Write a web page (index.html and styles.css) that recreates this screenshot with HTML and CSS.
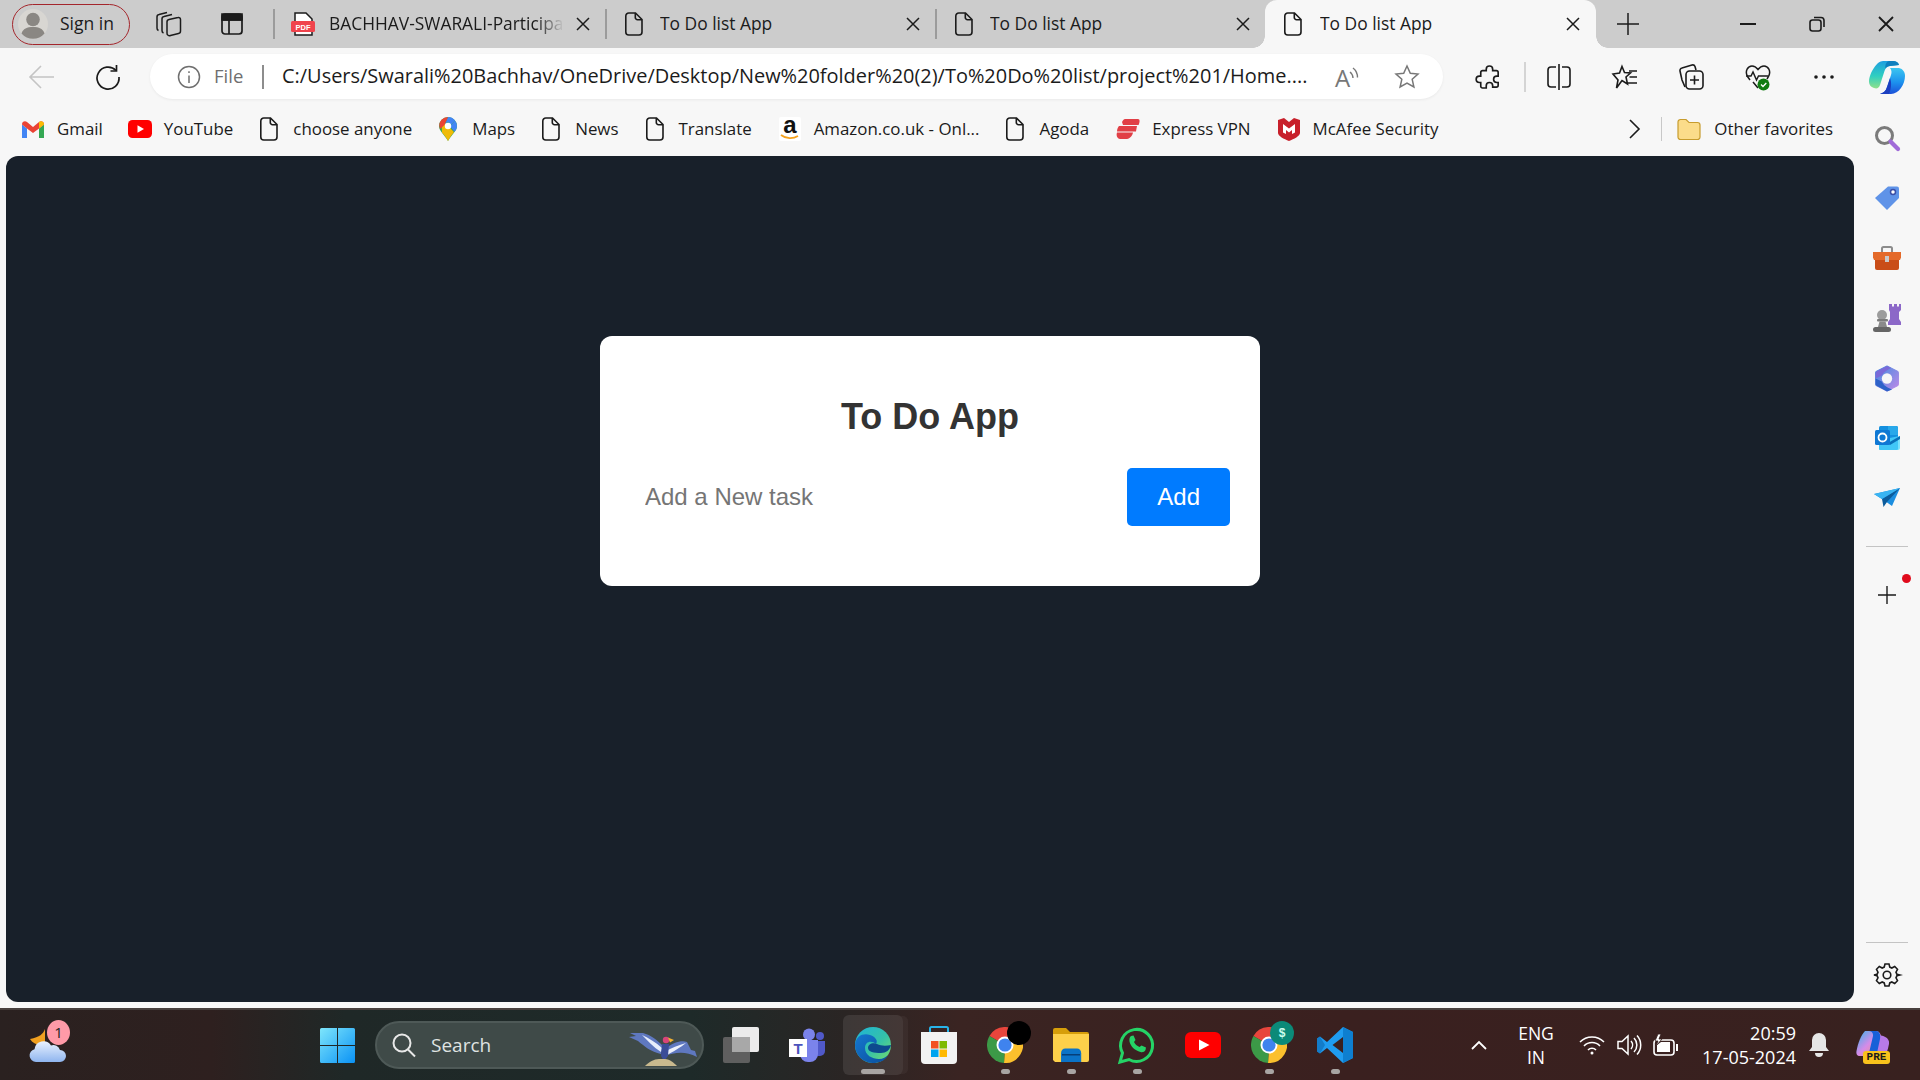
FILE: index.html
```html
<!DOCTYPE html>
<html lang="en">
<head>
<meta charset="utf-8">
<title>To Do list App</title>
<link rel="stylesheet" href="styles.css">
</head>
<body>
<svg class="defs" width="0" height="0" aria-hidden="true">
  <defs>
    <symbol id="doc" viewBox="0 0 18 24"><path d="M3.8 1H10.5L17 7.5V20a3 3 0 0 1-3 3H3.8a3 3 0 0 1-3-3V4a3 3 0 0 1 3-3Z M10.3 1.2V5.500a2.200 2.200 0 0 0 2.200 2.200H16.800" fill="none" stroke="#1b1b1b" stroke-width="1.600"/></symbol>
    <symbol id="x" viewBox="0 0 14 14"><path d="M1 1 13 13M13 1 1 13" fill="none" stroke="#1b1b1b" stroke-width="1.500"/></symbol>
    <symbol id="chrome" viewBox="0 0 36 36">
      <path d="M18 18 2.400 9A18 18 0 0 1 33.600 9Z" fill="#e8453c"/>
      <path d="M18 18 33.600 9A18 18 0 0 1 17 36Z" fill="#fbc02d"/>
      <path d="M18 18 17 36A18 18 0 0 1 2.400 9Z" fill="#3c9a47"/>
      <circle cx="18" cy="18" r="8.500" fill="#fff"/><circle cx="18" cy="18" r="6.600" fill="#3f83ee"/>
    </symbol>
    <linearGradient id="winG" x1="0" y1="0" x2="1" y2="1"><stop offset="0" stop-color="#7ee6fb"/><stop offset="1" stop-color="#0a92f5"/></linearGradient>
    <linearGradient id="edgeG" x1="0" y1="0" x2="1" y2="1"><stop offset="0" stop-color="#1eb4d8"/><stop offset=".55" stop-color="#35c1a8"/><stop offset="1" stop-color="#7adf68"/></linearGradient>
    <linearGradient id="edgeB" x1="0" y1="0" x2="1" y2="1"><stop offset="0" stop-color="#1577cf"/><stop offset="1" stop-color="#0a4f9e"/></linearGradient>
    <linearGradient id="cloudG" x1="0" y1="0" x2="0" y2="1"><stop offset="0" stop-color="#e9f2ff"/><stop offset="1" stop-color="#8fb5ef"/></linearGradient>
    <linearGradient id="copT" x1="0" y1="0" x2="0" y2="1"><stop offset="0" stop-color="#1f9fe0"/><stop offset=".55" stop-color="#30cfc0"/><stop offset="1" stop-color="#8fe08a"/></linearGradient>
    <linearGradient id="copB" x1="0" y1="0" x2="0" y2="1"><stop offset="0" stop-color="#3cc6f0"/><stop offset=".55" stop-color="#1c92ee"/><stop offset="1" stop-color="#1c50d8"/></linearGradient>
    <linearGradient id="copH" x1="0" y1="0" x2="1" y2="1"><stop offset="0" stop-color="#2fb5ea"/><stop offset=".5" stop-color="#d58be8"/><stop offset="1" stop-color="#f29a6b"/></linearGradient>
    <linearGradient id="m365" x1="0" y1="0" x2="1" y2="1"><stop offset="0" stop-color="#3f8de0"/><stop offset="1" stop-color="#c08ae8"/></linearGradient>
  </defs>
</svg>

<div class="window">
  <header class="tabstrip">
    <div class="signin">
      <svg width="30" height="34" viewBox="0 0 30 34"><circle cx="15" cy="17" r="15" fill="#d8d6d2"/><circle cx="15" cy="12.500" r="6.800" fill="#8a8783"/><path d="M3.500 26.500C5 21.500 9 20 15 20s10 1.500 11.500 6.500A15 15 0 0 1 3.500 26.500Z" fill="#8a8783"/></svg>
      <span>Sign in</span>
    </div>
    <div class="strip-btn first">
      <svg width="26" height="26" viewBox="0 0 26 26" fill="none" stroke="#1b1b1b" stroke-width="1.500"><path d="M11 11a2.500 2.500 0 0 1 2-2.500l9-2a2 2 0 0 1 2.500 2V20a2.500 2.500 0 0 1-2 2.500l-8 2a2.500 2.500 0 0 1-3.500-2.500Z"/><path d="M7.500 22a2.500 2.500 0 0 1-1.500-2.500V8a2.500 2.500 0 0 1 2-2.500l8-2"/><path d="M2.500 19.500A2.500 2.500 0 0 1 1 17V6a2.500 2.500 0 0 1 2-2.500L11 1.500"/></svg>
    </div>
    <div class="strip-btn second">
      <svg width="22" height="22" viewBox="0 0 22 22" fill="none" stroke="#1b1b1b" stroke-width="1.700"><rect x="1" y="1" width="20" height="20" rx="3"/><path d="M1 7H21M8 7V21"/><path d="M1 1H21V7H1Z" fill="#1b1b1b"/></svg>
    </div>
    <i class="tab-sep lead"></i>
    <div class="tab pdf">
      <svg class="pdf-icon" width="24" height="24" viewBox="0 0 24 24"><path d="M4 1H15L21 7V23H4Z" fill="#fff" stroke="#1b1b1b" stroke-width="1.500"/><rect x="0" y="9" width="24" height="11" rx="1.500" fill="#f0434c"/><text x="12" y="17.500" text-anchor="middle" class="pdf-label">PDF</text></svg>
      <span class="tab-title fade">BACHHAV-SWARALI-Participa</span>
      <svg class="tab-x" width="14" height="14"><use href="#x"/></svg>
    </div>
    <i class="tab-sep"></i>
    <div class="tab">
      <svg class="doc" width="18" height="24"><use href="#doc"/></svg>
      <span class="tab-title">To Do list App</span>
      <svg class="tab-x" width="14" height="14"><use href="#x"/></svg>
    </div>
    <i class="tab-sep"></i>
    <div class="tab">
      <svg class="doc" width="18" height="24"><use href="#doc"/></svg>
      <span class="tab-title">To Do list App</span>
      <svg class="tab-x" width="14" height="14"><use href="#x"/></svg>
    </div>
    <div class="tab active">
      <svg class="doc" width="18" height="24"><use href="#doc"/></svg>
      <span class="tab-title">To Do list App</span>
      <svg class="tab-x" width="14" height="14"><use href="#x"/></svg>
    </div>
    <div class="new-tab">
      <svg width="22" height="22" viewBox="0 0 22 22"><path d="M11 0V22M0 11H22" stroke="#1b1b1b" stroke-width="1.500"/></svg>
    </div>
    <div class="win-ctrls">
      <div class="win-btn"><svg width="16" height="16" viewBox="0 0 16 16"><path d="M0 8H16" stroke="#1b1b1b" stroke-width="2"/></svg></div>
      <div class="win-btn"><svg width="16" height="16" viewBox="0 0 16 16" fill="none" stroke="#1b1b1b" stroke-width="1.600"><rect x="1" y="4" width="11" height="11" rx="2.500"/><path d="M5 1.500H12a3 3 0 0 1 3 3V11"/></svg></div>
      <div class="win-btn"><svg width="16" height="16" viewBox="0 0 16 16"><path d="M1 1 15 15M15 1 1 15" stroke="#1b1b1b" stroke-width="1.800"/></svg></div>
    </div>
  </header>

  <nav class="toolbar">
    <div class="tool back"><svg width="26" height="24" viewBox="0 0 26 24" fill="none" stroke="#c4c4c4" stroke-width="1.600"><path d="M25 12H1M12 1 1 12l11 11"/></svg></div>
    <div class="tool reload"><svg width="26" height="26" viewBox="0 0 26 26" fill="none" stroke="#1b1b1b" stroke-width="1.700"><path d="M21 6.500A11 11 0 1 0 24 13"/><path d="M21.500 1V7H15.500"/></svg></div>
    <div class="addr">
      <svg class="info" width="24" height="24" viewBox="0 0 24 24" fill="none" stroke="#6f6f6f" stroke-width="1.500"><circle cx="12" cy="12" r="10.500"/><path d="M12 10.500V18M12 6.300V8"/></svg>
      <span class="file">File</span>
      <i class="addr-sep"></i>
      <span class="url">C:/Users/Swarali%20Bachhav/OneDrive/Desktop/New%20folder%20(2)/To%20Do%20list/project%201/Home....</span>
      <div class="addr-actions">
        <svg width="26" height="26" viewBox="0 0 26 26" fill="none" stroke="#777" stroke-width="1.400"><text x="1" y="23" class="aloud">A</text><path d="M16 8a8 8 0 0 1 3 6M19 4a12 12 0 0 1 4.500 9.500"/></svg>
        <svg width="26" height="26" viewBox="0 0 26 26" fill="none" stroke="#777" stroke-width="1.500"><path d="M13 2l3.300 7.300 7.700.8-5.800 5.200 1.700 7.700L13 19l-6.900 4 1.700-7.700L2 10.100l7.700-.8Z"/></svg>
      </div>
    </div>
    <div class="tools-a">
      <div class="tool"><svg class="ext" width="22" height="24" viewBox="0 0 24 26" fill="none" stroke="#1b1b1b" stroke-width="1.800"><path d="M9 4.500a3.500 3.500 0 0 1 7 0V6h4a2 2 0 0 1 2 2v4h-1.500a3.500 3.500 0 0 0 0 7H22v3a2 2 0 0 1-2 2h-4v-1.500a3.500 3.500 0 0 0-7 0V25H5a2 2 0 0 1-2-2v-4H1.500a3.500 3.500 0 0 1 0-7H3V8a2 2 0 0 1 2-2h4Z"/></svg></div>
      <i class="tool-sep"></i>
    </div>
    <div class="tools-b">
      <div class="tool"><svg width="24" height="26" viewBox="0 0 24 26" fill="none" stroke="#1b1b1b" stroke-width="1.600"><path d="M9 3H4a3 3 0 0 0-3 3v14a3 3 0 0 0 3 3h5M15 3h5a3 3 0 0 1 3 3v14a3 3 0 0 1-3 3h-5"/><path d="M12 0V26"/></svg></div>
      <div class="tool"><svg width="26" height="26" viewBox="0 0 26 26" fill="none" stroke="#1b1b1b" stroke-width="1.600"><path d="M10 2.500l2.500 6 6 .5-4.500 4 1.500 7-5.500-3.500L4.500 24l1.500-8L1 10l6.500-1Z"/><path d="M17 7h8M17.500 13H25M16 19h9"/></svg></div>
      <div class="tool"><svg width="26" height="28" viewBox="0 0 26 28" fill="none" stroke="#1b1b1b" stroke-width="1.600"><path d="M7 24 4 17 2 8a2.500 2.500 0 0 1 2-3l10-3a2.500 2.500 0 0 1 3 1.500L18 7"/><rect x="8" y="8" width="17" height="18" rx="3.500"/><path d="M16.500 12.500V21.500M12 17H21"/></svg></div>
      <div class="tool"><svg width="28" height="28" viewBox="0 0 28 28"><path d="M6 17 3.500 13.500C.5 8 4 3 8 3c2.500 0 4.500 1.500 6 3.500C15.500 4.500 17.500 3 20 3c4 0 7.500 5 4.500 10.500L23 16" fill="none" stroke="#1b1b1b" stroke-width="1.500"/><path d="M2 13h5l2-4 3.500 8 2-4H24M9 19l5 6" fill="none" stroke="#1b1b1b" stroke-width="1.500"/><circle cx="19.500" cy="21.500" r="6" fill="#107c10"/><path d="M17 21.500l2 2 3.300-3.500" fill="none" stroke="#fff" stroke-width="1.300"/></svg></div>
      <div class="tool"><svg width="20" height="4" viewBox="0 0 20 4" fill="#1b1b1b"><circle cx="2" cy="2" r="1.800"/><circle cx="10" cy="2" r="1.800"/><circle cx="18" cy="2" r="1.800"/></svg></div>
      <div class="tool copilot"><svg width="36" height="34" viewBox="0 0 36 34"><path d="M30 8c4 1 6 4 6 8 0 8-6 18-14 18H11c3-1 6-3 7-7l4-12c1-3 .5-5-1-7Z" fill="url(#copB)"/><path d="M14 1H24c3 0 5 1 6 4L21 6c-3 .5-4.500 2-5.500 5L11 25c-1 3-3 4-6 3-3-1-5-3-5-7C1 12 8 1 14 1Z" fill="url(#copT)"/><path d="M20 1h4c3 0 5 1 6 4l-9 1c-2 .3-3.500 1.200-4.500 2.500C16 5 17 2 20 1Z" fill="#0f7fbe"/><path d="M11 34c3-1 6-3 7-7l3-9c2 5 1 12-1 16Z" fill="#1c3fc0"/></svg></div>
    </div>
  </nav>

  <div class="body">
    <div class="main">
      <div class="bookmarks">
        <a class="bm gmail first-bm"><svg width="22" height="17" viewBox="0 0 22 17"><path d="M0 3.500V17H5V7.500Z" fill="#4285f4"/><path d="M22 3.500V17H17V7.500Z" fill="#34a853"/><path d="M0 3.500C0 .5 3 -.5 5 1L11 6 17 1c2-1.500 5-.5 5 2.500L17 7.500l-6 4.500-6-4.500Z" fill="#ea4335"/><path d="M17 1c2-1.500 5-.5 5 2.500L17 7.500Z" fill="#fbbc04"/></svg><span>Gmail</span></a>
        <a class="bm tight"><svg width="24" height="18" viewBox="0 0 24 18"><rect width="24" height="18" rx="4.500" fill="#f00"/><path d="M9.500 5.200 16 9l-6.500 3.800Z" fill="#fff"/></svg><span>YouTube</span></a>
        <a class="bm"><svg width="18" height="24"><use href="#doc"/></svg><span>choose anyone</span></a>
        <a class="bm"><svg width="18" height="24" viewBox="0 0 18 24"><path d="M9 0a9 9 0 0 1 9 9c0 5-5 8-9 15C5 17 0 14 0 9a9 9 0 0 1 9-9Z" fill="#34a853"/><path d="M2.500 2.800 15 15c-2 2.500-4 5-6 9-2-4-4-6-6-8.500Z" fill="#fbbc04" opacity=".95"/><path d="M9 0a9 9 0 0 1 7 3.400L12 8 9 5 6 7Z" fill="#4285f4"/><path d="M2.500 2.800A9 9 0 0 1 9 0L5.500 8 1 12A9 9 0 0 1 2.500 2.800Z" fill="#ea4335"/><path d="M16 3.400A9 9 0 0 1 18 9c0 2.300-1 4.200-2.500 5.800L11 9.500Z" fill="#4285f4"/><circle cx="9" cy="9" r="3.200" fill="#fff"/></svg><span>Maps</span></a>
        <a class="bm"><svg width="18" height="24"><use href="#doc"/></svg><span>News</span></a>
        <a class="bm"><svg width="18" height="24"><use href="#doc"/></svg><span>Translate</span></a>
        <a class="bm gmail"><svg width="22" height="24" viewBox="0 0 22 24"><rect width="22" height="24" rx="2" fill="#fff"/><text x="11" y="16" text-anchor="middle" class="amazon-a">a</text><path d="M2 18c5 4 12 4 17 1" fill="none" stroke="#f5a11c" stroke-width="1.800"/></svg><span>Amazon.co.uk - Onl...</span></a>
        <a class="bm"><svg width="18" height="24"><use href="#doc"/></svg><span>Agoda</span></a>
        <a class="bm tight"><svg width="24" height="20" viewBox="0 0 24 20" fill="#e13f46"><path d="M9 0h13c2 0 2 3 .5 6H7L6 3C7 1 8 0 9 0Z"/><path d="M3 7H21l-1 5.500H1C1 10 2 8 3 7Z"/><path d="M1 13.500H17c-.5 3-3 6-6 6.500H4C1 20 0 16 1 13.500Z"/></svg><span>Express VPN</span></a>
        <a class="bm gmail"><svg width="22" height="24" viewBox="0 0 22 24"><path d="M0 3 6 1l5 4 5-4 6 2v13c0 3-6 6-11 8C6 22 0 19 0 16Z" fill="#c8202b"/><path d="M5 7l6 4.500L17 7v8.500l-3 1.500v-4l-3 2.500-3-2.500v4l-3-1.500Z" fill="#fff"/></svg><span>McAfee Security</span></a>
        <div class="bm-right">
          <svg width="24" height="24" viewBox="0 0 24 24" fill="none" stroke="#1b1b1b" stroke-width="1.600"><path d="M8 3 17 12 8 21"/></svg>
          <i class="bm-sep"></i>
          <a class="bm gmail"><svg width="24" height="22" viewBox="0 0 24 22"><path d="M1 4a2.500 2.500 0 0 1 2.500-2.500H9l3 3h8.500A2.500 2.500 0 0 1 23 7v12a2.500 2.500 0 0 1-2.500 2.500h-17A2.500 2.500 0 0 1 1 19Z" fill="#fbdc8a" stroke="#c79c2e" stroke-width="1.200"/></svg><span>Other favorites</span></a>
        </div>
      </div>
      <main class="content">
        <section class="card">
          <h1>To Do App</h1>
          <form class="task-form">
            <input class="task-input" type="text" placeholder="Add a New task">
            <button class="add-btn" type="button">Add</button>
          </form>
        </section>
      </main>
    </div>

    <aside class="side">
      <div class="side-cell"><svg width="26" height="26" viewBox="0 0 26 26"><circle cx="10.500" cy="10.500" r="8" fill="none" stroke="#7b7b7b" stroke-width="3"/><path d="M16.500 16.500 24 24" stroke="#a06ad8" stroke-width="4.200" stroke-linecap="round"/></svg></div>
      <div class="side-cell"><svg width="26" height="26" viewBox="0 0 26 26"><path d="M14 1.500h9a2 2 0 0 1 2 2v9.500L13 25 1 13Z" fill="#5f93e8"/><circle cx="19" cy="7" r="2.500" fill="#fff" stroke="#3a4fa8" stroke-width="1.500"/></svg></div>
      <div class="side-cell"><svg width="28" height="24" viewBox="0 0 28 24"><path d="M9 6V2.500A1.500 1.500 0 0 1 10.500 1h7A1.500 1.500 0 0 1 19 2.500V6" fill="none" stroke="#8c8c8c" stroke-width="2"/><path d="M0 6h28v5.500L27 14H1L0 11.500Z" fill="#e46a2a"/><path d="M2 14h24v8a2 2 0 0 1-2 2H4a2 2 0 0 1-2-2Z" fill="#c94d18"/><rect x="12" y="10" width="4" height="6" fill="#c9c9c9"/></svg></div>
      <div class="side-cell"><svg width="28" height="28" viewBox="0 0 28 28"><path d="M16 0h3v2.500h2V0h3v2.500h2V0h2v6l-2 2v7l2 3v3H15v-3l2-3V8l-1-2Z" fill="#8c68c8"/><circle cx="9" cy="11" r="5" fill="#9c9c9c"/><rect x="4" y="15" width="11" height="2.500" rx="1" fill="#7c7c7c"/><path d="M6.500 17.500h6L14 23H5Z" fill="#8a8a8a"/><rect y="23" width="18" height="5" rx="2.500" fill="#666"/></svg></div>
      <div class="side-cell"><svg width="26" height="27" viewBox="0 0 24 26"><path d="M12 1 22 6a2 2 0 0 1 1 2V18a2 2 0 0 1-1 2L12 25 2 20a2 2 0 0 1-1-2V8a2 2 0 0 1 1-2Z" fill="url(#m365)" stroke="url(#m365)" stroke-width="1" stroke-linejoin="round"/><path d="M1 13 7 16c2 4 5 6 10 7.500L12 25.500 2 20a2 2 0 0 1-1-2Z" fill="#2f62c8"/><path d="M12 1 2 6a2 2 0 0 0-1 2v5l6-3c2-3 5-5 9-7Z" fill="#7b6ad8"/><circle cx="12" cy="13" r="5" fill="#f7f7f7"/></svg></div>
      <div class="side-cell"><svg width="25" height="24" viewBox="0 0 25 24"><rect x="4" y="0" width="19" height="24" rx="1.500" fill="#1490df"/><path d="M13 0h8a2 2 0 0 1 2 2v7H13Z" fill="#28a8ea"/><path d="M4 14 25 10v12a2 2 0 0 1-2 2H4Z" fill="#50d9ff" opacity=".75"/><path d="M13 17 25 10v3L15 19Z" fill="#0a6fb8"/><rect y="4" width="15" height="15" rx="1.500" fill="#0f78d4"/><circle cx="7.500" cy="11.500" r="4" fill="none" stroke="#fff" stroke-width="1.800"/></svg></div>
      <div class="side-cell"><svg width="26" height="20" viewBox="0 0 26 20"><path d="M0 6 26 0 18 18 11 13Z" fill="#1b8ee0"/><path d="M26 0 8 11l1.500 8L13 14Z" fill="#0c5c9c"/><path d="M26 0 8 11 0 6Z" fill="#39b4f2"/></svg></div>
      <i class="side-sep"></i>
      <div class="side-cell plus">
        <svg width="18" height="18" viewBox="0 0 18 18"><path d="M9 0V18M0 9H18" stroke="#1b1b1b" stroke-width="1.400"/></svg>
        <b class="red-dot"></b>
      </div>
      <i class="side-sep bottom"></i>
      <div class="side-cell"><svg width="26" height="26" viewBox="0 0 26 26" fill="none" stroke="#1b1b1b" stroke-width="1.600"><circle cx="13" cy="13" r="3.800"/><path d="M11 2h4l.8 3.100 2 .9L20.700 4.500l2.800 2.800L22 10.200l.9 2 3 .8v0l-3 .8-.9 2 1.500 2.900-2.800 2.800L17.800 20l-2 .9L15 24h-4l-.8-3.100-2-.9-2.900 1.500-2.800-2.800L4 15.800l-.9-2L0 13l3.100-.8.900-2L2.500 7.300l2.800-2.800L8.200 6l2-.9Z"/></svg></div>
    </aside>
  </div>

  <footer class="taskbar">
    <div class="weather">
      <svg width="38" height="38" viewBox="0 0 38 38"><path d="M16 3c-2 5-5 8-15 10 3 5 9 7 15 5Z" fill="#f0a020"/><path d="M7 36a6.500 6.500 0 0 1-1.500-12.800A9 9 0 0 1 22 19.500a7 7 0 0 1 9 4.500 6 6 0 0 1 0 12Z" fill="url(#cloudG)"/></svg>
      <b class="weather-badge">1</b>
    </div>
    <div class="task-cell win-cell">
      <svg width="35" height="35" viewBox="0 0 35 35"><path d="M0 1.500A1.500 1.500 0 0 1 1.500 0H17V17H0ZM18 0H33.500A1.500 1.500 0 0 1 35 1.500V17H18ZM0 18H17V35H1.500A1.500 1.500 0 0 1 0 33.500ZM18 18H35V33.500A1.500 1.500 0 0 1 33.500 35H18Z" fill="url(#winG)"/></svg>
    </div>
    <div class="search-pill">
      <svg width="26" height="26" viewBox="0 0 26 26" fill="none" stroke="#e8e8e8" stroke-width="2"><circle cx="11" cy="11" r="8.500"/><path d="M17 17.500 24 24.500"/></svg>
      <span>Search</span>
      <svg class="bird" width="68" height="34" viewBox="0 0 68 34"><path d="M32 22C22 20 15 14 9 9L0 5 7 4 1 1H14C22 3 28 8 34 14Z" fill="#5f78c0"/><path d="M33 16C26 10 20 6 13 3 18 8 24 15 32 20Z" fill="#e8eefc"/><path d="M35 24C45 21 55 18 68 25L66 19 62 18 58 10C52 8 44 11 37 16Z" fill="#5f78c0"/><path d="M35 20C42 16 50 13 57 11 52 15 44 20 36 24Z" fill="#eef2fc"/><path d="M33 12h7l-1 12-4 5-3-5Z" fill="#3a4c98"/><circle cx="37" cy="8" r="3.200" fill="#d8457a"/><path d="M39 5.500 45 8 41 10.500Z" fill="#f2b132"/><path d="M16 34C20 30 25 27 30 27H36C41 27 45 31 48 34Z" fill="#c9b98e"/></svg>
    </div>
    <div class="task-cell taskview">
      <svg width="36" height="36" viewBox="0 0 36 36"><rect x="0" y="10" width="27" height="26" rx="2" fill="#5f5f5f"/><rect x="9" y="0" width="27" height="25" rx="2" fill="#ececec"/><rect x="9" y="10" width="18" height="15" fill="#a8a8a8"/></svg>
    </div>
    <div class="task-cell">
      <svg width="36" height="34" viewBox="0 0 36 34"><circle cx="20" cy="6.500" r="6" fill="#7b83eb"/><circle cx="31" cy="8" r="4" fill="#5059c9"/><path d="M26 13h10v10a5 5 0 0 1-5 5h-5Z" fill="#5059c9"/><path d="M11 12h18v14a8 8 0 0 1-8 8h-2a8 8 0 0 1-8-8Z" fill="#7b83eb"/><rect y="11" width="18" height="18" fill="#fff"/><text x="9" y="25.500" text-anchor="middle" class="teams-t">T</text></svg>
    </div>
    <div class="task-cell edge-cell">
      <svg width="36" height="36" viewBox="0 0 36 36"><circle cx="18" cy="18" r="18" fill="url(#edgeG)"/><path d="M0 18C1 8 9 6 15 8c6 2 8 6 6 9-4-4-11-3-11 4 0 7 7 11 14 11 4 0 7-2 9-4-3 6-9 8-15 8C8 36 0 28 0 18Z" fill="url(#edgeB)"/><path d="M13 21c0-4 5-6 9-4 4 2 9 2 14 1-1 5-5 8-10 8-7 0-13-1-13-5Z" fill="#0d4a8e"/></svg>
      <b class="run wide"></b>
    </div>
    <div class="task-cell">
      <svg width="36" height="38" viewBox="0 0 36 38"><path d="M9 10V2.500A1.500 1.500 0 0 1 10.500 1h15A1.500 1.500 0 0 1 27 2.500V10" fill="none" stroke="#28b4ea" stroke-width="2"/><path d="M0 6h36v28a4 4 0 0 1-4 4H4a4 4 0 0 1-4-4Z" fill="#f2f2f2"/><rect x="10" y="15" width="7.500" height="7.500" fill="#f25022"/><rect x="18.500" y="15" width="7.500" height="7.500" fill="#7fba00"/><rect x="10" y="23.500" width="7.500" height="7.500" fill="#00a4ef"/><rect x="18.500" y="23.500" width="7.500" height="7.500" fill="#ffb900"/></svg>
    </div>
    <div class="task-cell">
      <svg width="36" height="36"><use href="#chrome"/></svg>
      <b class="blob"></b>
      <b class="run"></b>
    </div>
    <div class="task-cell">
      <svg width="36" height="34" viewBox="0 0 36 34"><path d="M0 2a2 2 0 0 1 2-2h11l4 4h17a2 2 0 0 1 2 2v6H0Z" fill="#d69e0a"/><path d="M0 32V6h36v26a2 2 0 0 1-2 2H2Z" fill="#fdd04a"/><path d="M6 34h24v-9a5 5 0 0 0-5-5H11a5 5 0 0 0-5 5Z" fill="#0b73c7" transform="translate(3 1) scale(.84 .97)"/><rect x="9" y="26" width="18" height="1.500" fill="#063f78"/></svg>
      <b class="run"></b>
    </div>
    <div class="task-cell">
      <svg width="36" height="36" viewBox="0 0 36 36"><path d="M1 35l2.500-9A16 16 0 1 1 10 32.500Z" fill="none" stroke="#25d366" stroke-width="3"/><path d="M12 9l2.500-.5 2 4.500-1.500 2c1 2 3 4 5.500 5l2-1.500 4.500 2-.5 2.500c-1 2-3 2.500-5 2-6-1.500-10-6-11-10.500-.3-2.500 0-4.500 1.500-5.500Z" fill="#25d366"/></svg>
      <b class="run"></b>
    </div>
    <div class="task-cell">
      <svg width="36" height="26" viewBox="0 0 36 26"><rect width="36" height="26" rx="6" fill="#f00"/><path d="M14 7.500 24.500 13 14 18.500Z" fill="#fff"/></svg>
    </div>
    <div class="task-cell">
      <svg width="36" height="36"><use href="#chrome"/></svg>
      <b class="money">$</b>
      <b class="run"></b>
    </div>
    <div class="task-cell">
      <svg width="36" height="36" viewBox="0 0 36 36"><path d="M26 0 36 5V31L26 36 10 21 3 26.500 0 24.500V11.500L3 9.500 10 15Z M26 10 15.500 18 26 26Z" fill="#1f9cf0" fill-rule="evenodd"/><path d="M26 0 36 5V31L26 36Z" fill="#0e7fd0"/><path d="M3 9.500 0 11.500V24.500L3 26.500 8 18Z" fill="#0e6fb8" opacity=".7"/></svg>
      <b class="run"></b>
    </div>

    <div class="tray">
      <svg class="tray-chev" width="16" height="10" viewBox="0 0 16 10" fill="none" stroke="#fff" stroke-width="1.800"><path d="M1 9 8 2l7 7"/></svg>
      <div class="lang"><span>ENG</span><span>IN</span></div>
      <svg class="tray-wifi" width="26" height="20" viewBox="0 0 26 20" fill="none" stroke="#fff" stroke-width="1.600"><path d="M1 7a17 17 0 0 1 24 0M5 11a11 11 0 0 1 16 0M9 15a5.500 5.500 0 0 1 8 0"/><circle cx="13" cy="18" r="1.500" fill="#fff" stroke="none"/></svg>
      <svg class="tray-vol" width="24" height="22" viewBox="0 0 24 22" fill="none" stroke="#fff" stroke-width="1.500"><path d="M1 7.500H5L11 2V20L5 14.500H1Z"/><path d="M14 7a6 6 0 0 1 0 8M17 4a10 10 0 0 1 0 14M20 1.500a14 14 0 0 1 0 19"/></svg>
      <svg class="tray-bat" width="26" height="22" viewBox="0 0 26 22"><rect x="1" y="6" width="20" height="15" rx="3" fill="none" stroke="#fff" stroke-width="1.600"/><path d="M23 10h2v7h-2Z" fill="#fff"/><path d="M4 18V11l4-3h9v10Z" fill="#fff"/><path d="M5 0 2 7h3L3 12l6-7H6l2-5Z" fill="#fff" stroke="#35201f" stroke-width=".8"/></svg>
      <div class="clock"><span>20:59</span><span>17-05-2024</span></div>
      <svg class="tray-bell" width="20" height="24" viewBox="0 0 20 24" fill="#e6e6e6"><path d="M10 0a7 7 0 0 1 7 7v7l3 4H0l3-4V7a7 7 0 0 1 7-7Z"/><path d="M6 20h8a4 4 0 0 1-8 0Z"/></svg>
      <div class="pre-icon">
        <svg width="34" height="30" viewBox="0 0 34 30"><path d="M9 1h11c3 0 5 3 5 6l-4 19H4c-3 0-4-2-3.500-5C2 13 5 5 9 1Z" fill="url(#copH)"/><path d="M21 5c5 0 13 2 12 9-1 6-3 11-6 14l-9-1Z" fill="#b77ae8"/><path d="M13 1h7c3 0 5 3 4 8l-3 14H13l4-17c.5-2-1-5-4-5Z" fill="#1760d8"/></svg>
        <b class="pre">PRE</b>
      </div>
    </div>
  </footer>
</div>
</body>
</html>
```

FILE: styles.css
```css
* { box-sizing: border-box; }
html, body { margin: 0; padding: 0; height: 100%; }
body { font-family: "Open Sans", "Noto Sans", sans-serif; color: #1b1b1b; overflow: hidden; }
.defs { display: block; width: 0; height: 0; }
svg { display: block; flex: none; overflow: visible; }
i, b { font-style: normal; }

.window { width: 1920px; height: 1080px; display: flex; flex-direction: column; background: #f7f7f7; }

/* tab strip */
.tabstrip { height: 48px; flex: none; display: flex; align-items: center; background: #ccc; }
.signin { width: 118px; height: 41px; margin-left: 12px; padding-left: 5px; display: flex; align-items: center; gap: 12px; border: 1.5px solid #a4262c; border-radius: 21px; font-size: 17.500px; }
.signin span { padding-bottom: 2px; }
.strip-btn { width: 44px; height: 44px; display: flex; align-items: center; justify-content: center; }
.strip-btn.first { margin-left: 17px; }
.strip-btn.second { margin-left: 19px; }
.tab-sep { flex: none; width: 2px; height: 30px; background: #9b9b9b; }
.tab-sep.lead { margin-left: 19px; }
.tab { position: relative; flex: none; width: 328px; height: 48px; padding: 0 15px 0 18px; display: flex; align-items: center; }
.tab .doc { margin-right: 17px; }
.tab.pdf { width: 330px; padding-left: 16px; }
.pdf-icon { margin-right: 14px; }
.pdf-label { font: 700 7.500px "Liberation Sans", sans-serif; fill: #fff; }
.tab-title { flex: 1; min-width: 0; padding-bottom: 2px; font-size: 17.400px; white-space: nowrap; overflow: hidden; }
.tab-title.fade { -webkit-mask-image: linear-gradient(90deg, #000 88%, transparent); mask-image: linear-gradient(90deg, #000 88%, transparent); }
.tab .tab-x { margin-left: 12px; }
.tab.active { width: 331px; background: #f7f7f7; border-radius: 12px 12px 0 0; padding: 0 16px 0 19px; }
.tab.active .doc { margin-right: 18px; }
.tab.active::before, .tab.active::after { content: ""; position: absolute; bottom: 0; width: 12px; height: 12px; }
.tab.active::before { left: -12px; background: radial-gradient(circle at 0 0, #ccc 11.500px, #f7f7f7 12px); }
.tab.active::after { right: -12px; background: radial-gradient(circle at 100% 0, #ccc 11.500px, #f7f7f7 12px); }
.new-tab { margin-left: 21px; width: 22px; height: 22px; }
.win-ctrls { margin-left: auto; display: flex; }
.win-btn { width: 69px; height: 48px; display: flex; align-items: center; justify-content: center; }

/* toolbar */
.toolbar { height: 60px; flex: none; padding-bottom: 3px; display: flex; align-items: center; background: #f7f7f7; }
.tool { flex: none; width: 44px; height: 44px; display: flex; align-items: center; justify-content: center; }
.tool.back { margin-left: 20px; }
.tool.reload { margin-left: 22px; }
.addr { flex: none; width: 1293px; height: 45px; margin-left: 20px; padding: 0 23px 0 27px; display: flex; align-items: center; background: #fff; border-radius: 23px; box-shadow: 0 1px 3px rgba(0, 0, 0, .06); }
.file { margin-left: 13px; width: 31px; padding-bottom: 2px; font-size: 18.500px; color: #6f6f6f; }
.addr-sep { flex: none; width: 2px; height: 24px; margin: 0 18px 0 17px; background: #8d8d8d; }
.url { padding-bottom: 2px; font-size: 19.950px; white-space: nowrap; color: #1b1b1b; }
.addr-actions { margin-left: auto; display: flex; gap: 34px; }
.aloud { font: 400 24px "Open Sans", sans-serif; fill: #777; stroke: none; }
.tools-a { display: flex; align-items: center; gap: 15px; margin-left: 22px; }
.tool-sep { flex: none; width: 2px; height: 30px; background: #d4d4d4; }
.ext { margin-left: 3px; }
.tools-b { display: flex; align-items: center; gap: 22.200px; margin-left: 11px; }
.tool.copilot { margin-left: -3px; }

/* body */
.body { flex: 1; min-height: 0; display: flex; }
.main { flex: 1; min-width: 0; display: flex; flex-direction: column; }
.bookmarks { height: 48px; flex: none; padding: 0 21px 6px 22px; display: flex; align-items: center; gap: 27px; background: #f7f7f7; }
.bm { display: flex; align-items: center; gap: 15px; font-size: 16.900px; white-space: nowrap; }
.bm span { padding-bottom: 1px; }
.bm.tight { gap: 12px; }
.bm.gmail { gap: 13px; }
.bm.first-bm { margin-right: -2px; }
.amazon-a { font: 700 24px "Liberation Sans", sans-serif; fill: #111; }
.bm-right { margin-left: auto; display: flex; align-items: center; gap: 15px; }
.bm-sep { flex: none; width: 1px; height: 24px; background: #c8c8c8; }

.content { flex: 1; min-height: 0; margin: 0 0 6px 6px; padding-top: 180px; display: flex; flex-direction: column; align-items: center; background: #18202a; border-radius: 12px; font-family: "Liberation Sans", Arial, sans-serif; }
.card { width: 660px; padding: 60px 30px; background: #fff; border-radius: 12px; }
.card h1 { margin: 0 0 30px; font-size: 36px; line-height: 42px; font-weight: 700; color: #333; text-align: center; }
.task-form { display: flex; }
.task-input { flex: 1; min-width: 0; padding: 15px; border: 0; outline: 0; font: 24px "Liberation Sans", Arial, sans-serif; color: #333; background: transparent; }
.task-input::placeholder { color: #757575; opacity: 1; }
.add-btn { flex: none; padding: 15px 30px; border: 0; border-radius: 5px; font: 24px "Liberation Sans", Arial, sans-serif; color: #fff; background: #007bff; }

/* side pane */
.side { flex: none; width: 66px; padding-bottom: 3px; display: flex; flex-direction: column; align-items: center; background: #f7f7f7; }
.side-cell { position: relative; flex: none; width: 66px; height: 60px; display: flex; align-items: center; justify-content: center; }
.side-sep { flex: none; width: 42px; height: 1px; margin-top: 18px; background: #c4c4c4; }
.side-sep + .side-cell { margin-top: 18px; }
.side-sep.bottom { margin-top: auto; }
.side-sep.bottom + .side-cell { margin-top: 2px; }
.red-dot { position: absolute; top: 9px; left: 48px; width: 9px; height: 9px; border-radius: 50%; background: #e00b1c; }

/* taskbar */
.taskbar { height: 72px; flex: none; display: flex; align-items: center; border-top: 2px solid #48403e; background: linear-gradient(90deg, #2a2120 0, #2e201f 11%, #1f2827 18%, #1e2a29 36%, #2a2524 44%, #3a2422 50%, #3a201f 70%, #38211f 100%); color: #fff; }
.weather { position: relative; width: 38px; height: 38px; margin-left: 29px; }
.weather-badge { position: absolute; top: -6px; left: 18px; width: 23px; height: 25px; border-radius: 50%; background: #ff9aa8; color: #222; font: 400 15px/25px "Open Sans", sans-serif; text-align: center; }
.task-cell { position: relative; flex: none; width: 66px; height: 60px; display: flex; align-items: center; justify-content: center; }
.win-cell { margin-left: 237px; }
.search-pill { position: relative; flex: none; width: 329px; height: 48px; margin-left: 5px; margin-right: 4px; padding-left: 14px; display: flex; align-items: center; gap: 14px; background: #3f4a48; border: 2px solid #4e5957; border-radius: 24px; color: #dfe3e2; font-size: 19px; }
.bird { margin: 7px 5px 0 auto; }
.teams-t { font: 700 15px "Liberation Sans", sans-serif; fill: #4b53bc; }
.edge-cell::before { content: ""; position: absolute; inset: 0 3px; border-radius: 6px; background: rgba(255, 255, 255, .09); box-shadow: 6px 0 0 -1px rgba(255, 255, 255, .04); }
.edge-cell svg { position: relative; }
.run { position: absolute; left: 50%; bottom: 1px; width: 9px; height: 5px; margin-left: -4.500px; border-radius: 3px; background: #a8a5a3; }
.run.wide { width: 24px; margin-left: -12px; }
.blob { position: absolute; top: 6px; left: 35px; width: 24px; height: 24px; border-radius: 50%; background: #000; }
.money { position: absolute; top: 6px; left: 34px; width: 24px; height: 24px; border-radius: 50%; background: #0b8a78; color: #cfe; font: 700 12px/24px "Liberation Sans", sans-serif; text-align: center; }
.tray { flex: 1; min-width: 0; display: flex; align-items: center; }
.tray-chev { margin-left: 103px; }
.lang { width: 60px; margin-left: 19px; display: flex; flex-direction: column; align-items: center; font-size: 17.500px; line-height: 24px; }
.tray-wifi { margin-left: 13px; }
.tray-vol { margin-left: 12px; }
.tray-bat { margin-left: 12px; }
.clock { width: 112px; margin-left: 5px; display: flex; flex-direction: column; align-items: flex-end; font-size: 18px; line-height: 24px; }
.tray-bell { margin-left: 13px; }
.pre-icon { position: relative; margin-left: 27px; width: 34px; height: 30px; }
.pre { position: absolute; left: 7px; top: 21px; width: 27px; height: 13px; border-radius: 3px; background: #f8c21c; color: #1b1b1b; font: 700 11px/13px "Liberation Mono", monospace; text-align: center; }
```
